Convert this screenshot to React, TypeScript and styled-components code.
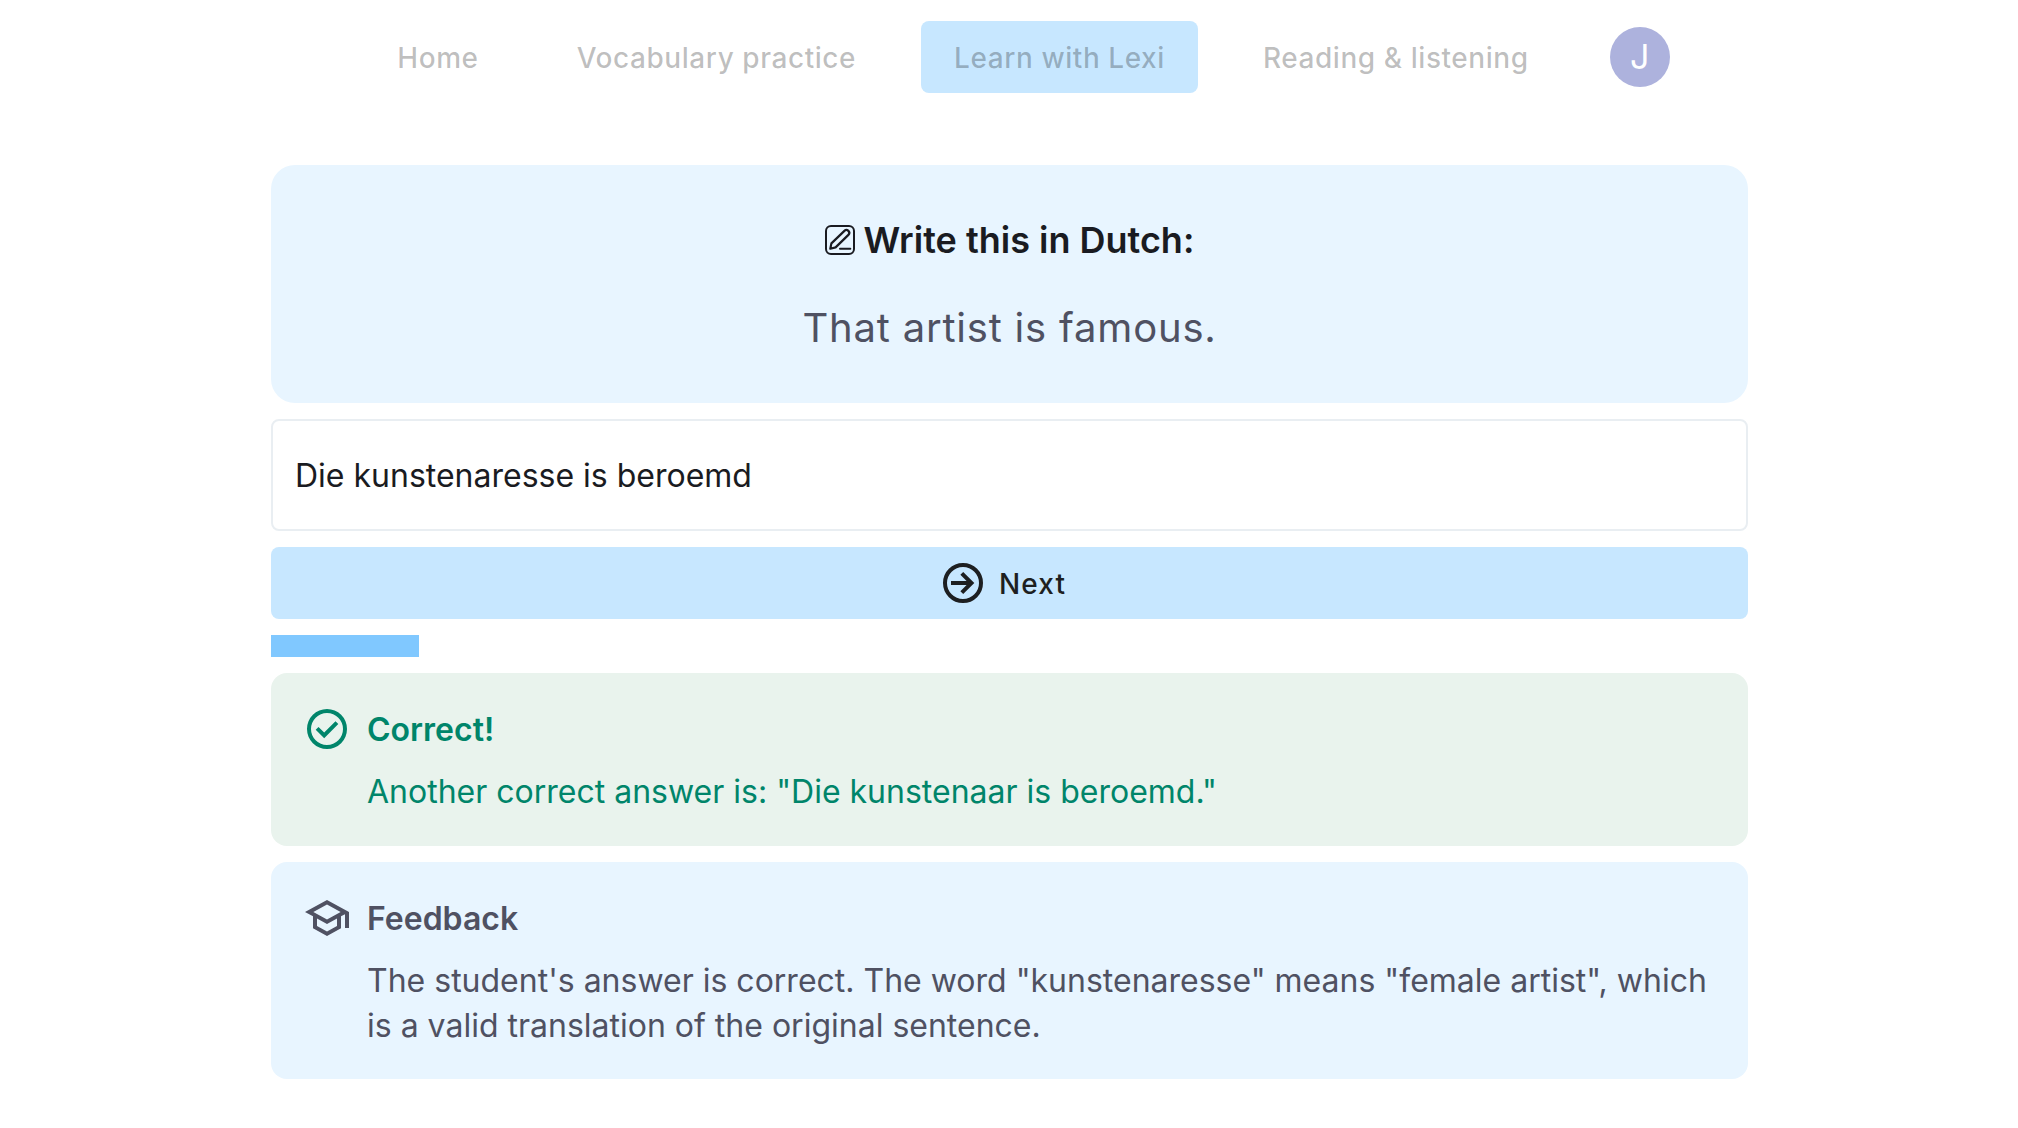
import React, { useState } from "react";
import styled, { createGlobalStyle } from "styled-components";

const GlobalStyle = createGlobalStyle`
  *, *::before, *::after { box-sizing: border-box; }
  body { margin: 0; background: #fff; color: #1a1b21; font-family: Inter, "Liberation Sans", sans-serif; }
  h1, h2, p { margin: 0; }
  svg { display: block; flex-shrink: 0; }
`;

const NavBar = styled.nav`
  display: flex;
  flex-wrap: wrap;
  justify-content: center;
  align-items: center;
  gap: 32px;
  padding: 21px 32px 21px 48px;
`;

const NavButton = styled.button<{ $active?: boolean }>`
  height: 72px;
  padding: 2px 33px 0;
  border: 0;
  border-radius: 8px;
  background: ${(p) => (p.$active ? "#c7e7ff" : "transparent")};
  color: rgba(0, 0, 0, 0.26);
  font: 500 28px/48px Inter, "Liberation Sans", sans-serif;
  letter-spacing: 0.02em;
`;

const Avatar = styled.button`
  width: 60px;
  height: 60px;
  margin-left: 16px;
  padding: 0;
  border: 0;
  border-radius: 50%;
  background: #adb2dd;
  color: #fff;
  font: 400 34px/60px Inter, "Liberation Sans", sans-serif;
`;

const Main = styled.main`
  display: flex;
  flex-direction: column;
  gap: 16px;
  width: 100%;
  max-width: 1540px;
  margin: 0 auto;
  padding: 51px 31px 51px 32px;
`;

const Prompt = styled.section`
  display: flex;
  flex-direction: column;
  align-items: center;
  gap: 34px;
  padding: 48px 32px;
  border-radius: 24px;
  background: #e8f5ff;
`;

const PromptTitle = styled.h1`
  display: flex;
  align-items: center;
  gap: 9px;
  font-size: 36px;
  line-height: 54px;
  font-weight: 600;
`;

const Sentence = styled.p`
  font-size: 40px;
  line-height: 54px;
  color: #4f5162;
  letter-spacing: 0.02em;
`;

const Answer = styled.input`
  width: 100%;
  height: 112px;
  padding: 0 22px;
  border: 2px solid #e9eef2;
  border-radius: 8px;
  background: #fff;
  color: #1a1b21;
  font: 400 32px/48px Inter, "Liberation Sans", sans-serif;
`;

const NextButton = styled.button`
  display: flex;
  justify-content: center;
  align-items: center;
  gap: 12px;
  height: 72px;
  padding: 0 24px 0 10px;
  border: 0;
  border-radius: 8px;
  background: #c7e7ff;
  color: #1d1f21;
  font: 500 28px/48px Inter, "Liberation Sans", sans-serif;
  letter-spacing: 0.04em;
`;

const NextLabel = styled.span`
  padding-top: 2px;
`;

const Progress = styled.div`
  height: 22px;
`;

const ProgressFill = styled.div`
  height: 100%;
  background: #80c8ff;
`;

const Notice = styled.section<{ $tone: "success" | "info" }>`
  display: flex;
  align-items: flex-start;
  gap: 16px;
  padding: 32px 32px 31px;
  border-radius: 16px;
  background: ${(p) => (p.$tone === "success" ? "#e9f3ed" : "#e8f5ff")};
  color: ${(p) => (p.$tone === "success" ? "#00856a" : "#4f5162")};
`;

const NoticeBody = styled.div`
  display: flex;
  flex-direction: column;
  gap: 15px;
`;

const NoticeTitle = styled.h2`
  font-size: 32px;
  line-height: 50px;
  font-weight: 600;
`;

const NoticeText = styled.p`
  font-size: 32px;
  line-height: 1.4;
`;

const EditIcon = () => (
  <svg width="30" height="30" viewBox="0 0 30 30" fill="none" stroke="currentColor" strokeWidth="2" strokeLinecap="round" strokeLinejoin="round" aria-hidden="true">
    <rect x="1" y="1" width="28" height="28" rx="5" />
    <path strokeWidth="2.200" d="M5.300 23.700L6.400 18.400L19.400 5.900a2.700 2.700 0 0 1 4 4L10.600 22.400z" />
    <path d="M15 23.700h10.300" />
  </svg>
);

const ArrowIcon = () => (
  <svg width="48" height="48" viewBox="0 0 24 24" fill="none" stroke="currentColor" strokeWidth="2" aria-hidden="true">
    <circle cx="12" cy="12" r="9" />
    <path d="M6 12H16M11.400 7.160L16.240 12L11.400 16.840" />
  </svg>
);

const CheckIcon = () => (
  <svg width="48" height="48" viewBox="0 0 24 24" fill="currentColor" aria-hidden="true">
    <path d="m10.600 16.600 7.050-7.050-1.400-1.400-5.650 5.650-2.850-2.850-1.400 1.400ZM12 2a10 10 0 1 0 0 20 10 10 0 0 0 0-20Zm0 2a8 8 0 1 1 0 16 8 8 0 0 1 0-16Z" />
  </svg>
);

const SchoolIcon = () => (
  <svg width="48" height="48" viewBox="0 0 24 24" fill="currentColor" aria-hidden="true">
    <path d="M12 3 1 9l4 2.180v6L12 21l7-3.820v-6l2-1.090V17h2V9L12 3zm6.820 6L12 12.720 5.180 9 12 5.280 18.820 9zM17 15.990l-5 2.730-5-2.730v-3.720L12 15l5-2.730v3.720z" />
  </svg>
);

const pages = ["Home", "Vocabulary practice", "Learn with Lexi", "Reading & listening"];
const activePage = "Learn with Lexi";

export default function App() {
  const [answer, setAnswer] = useState("Die kunstenaresse is beroemd");
  const progress = 10;

  return (
    <>
      <GlobalStyle />
      <NavBar>
        {pages.map((page) => (
          <NavButton key={page} type="button" $active={page === activePage} disabled>
            {page}
          </NavButton>
        ))}
        <Avatar type="button">J</Avatar>
      </NavBar>
      <Main>
        <Prompt>
          <PromptTitle>
            <EditIcon />
            Write this in Dutch:
          </PromptTitle>
          <Sentence>That artist is famous.</Sentence>
        </Prompt>
        <Answer aria-label="Your answer" value={answer} onChange={(e) => setAnswer(e.target.value)} />
        <NextButton type="button">
          <ArrowIcon />
          <NextLabel>Next</NextLabel>
        </NextButton>
        <Progress role="progressbar" aria-label="Progress" aria-valuenow={progress}>
          <ProgressFill style={{ width: `${progress}%` }} />
        </Progress>
        <Notice $tone="success">
          <CheckIcon />
          <NoticeBody>
            <NoticeTitle>Correct!</NoticeTitle>
            <NoticeText>Another correct answer is: "Die kunstenaar is beroemd."</NoticeText>
          </NoticeBody>
        </Notice>
        <Notice $tone="info">
          <SchoolIcon />
          <NoticeBody>
            <NoticeTitle>Feedback</NoticeTitle>
            <NoticeText>
              The student's answer is correct. The word "kunstenaresse" means "female artist", which is a valid
              translation of the original sentence.
            </NoticeText>
          </NoticeBody>
        </Notice>
      </Main>
    </>
  );
}
